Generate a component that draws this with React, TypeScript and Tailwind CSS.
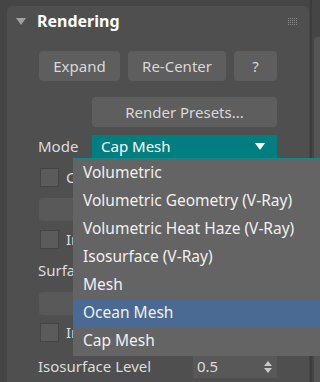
import React from 'react';

const font = { fontFamily: '"Noto Sans", "Open Sans", sans-serif' };

const modes = [
  'Volumetric',
  'Volumetric Geometry (V-Ray)',
  'Volumetric Heat Haze (V-Ray)',
  'Isosurface (V-Ray)',
  'Mesh',
  'Ocean Mesh',
  'Cap Mesh',
];

const Checkbox: React.FC<{ label: string }> = ({ label }) => (
  <div className="flex items-center h-[19px] ml-[33px] gap-[7px]">
    <div className="w-[19px] h-[19px] bg-[#5b5b5b] border border-[#444]" />
    <span className="text-[15px] text-[#dcdcdc] leading-none">{label}</span>
  </div>
);

const GripDots: React.FC = () => (
  <div className="grid grid-cols-5 gap-[1px]">
    {Array.from({ length: 20 }).map((_, i) => (
      <div key={i} className="w-[1px] h-[1px] bg-[#8a8a8a]" />
    ))}
  </div>
);

export default function App() {
  return (
    <div className="relative w-[320px] h-[382px] overflow-hidden bg-[#454545] flex" style={font}>
      {/* rollout panel */}
      <div className="ml-[7px] mt-[6px] w-[302px] h-[400px] rounded-t-[5px] bg-[#4f4f4f] flex flex-col">
        {/* header */}
        <div className="h-[30px] flex items-center pl-[9px] pr-[12px]">
          <div className="w-0 h-0 border-l-[5px] border-r-[5px] border-t-[7px] border-l-transparent border-r-transparent border-t-[#a0a0a0]" />
          <span className="ml-[11px] text-[16px] font-bold text-white">Rendering</span>
          <div className="ml-auto">
            <GripDots />
          </div>
        </div>

        {/* buttons */}
        <div className="mt-[15px] ml-[32px] flex gap-[8px] text-[15px] text-[#d8d8d8]">
          <div className="w-[81px] h-[30px] rounded-[4px] bg-[#5e5e5e] flex items-center justify-center">Expand</div>
          <div className="w-[98px] h-[30px] rounded-[4px] bg-[#5e5e5e] flex items-center justify-center">Re-Center</div>
          <div className="w-[43px] h-[30px] rounded-[4px] bg-[#5e5e5e] flex items-center justify-center">?</div>
        </div>

        <div className="mt-[16px] ml-[85px] w-[185px] h-[30px] rounded-[4px] bg-[#5e5e5e] flex items-center justify-center text-[15px] text-[#d8d8d8]">
          Render Presets...
        </div>

        {/* mode */}
        <div className="mt-[8px] h-[23px] flex items-center">
          <span className="ml-[31px] w-[54px] text-[15px] text-[#dcdcdc]">Mode</span>
          <div className="w-[185px] h-[23px] bg-[#017f80] flex items-center pl-[9px] pr-[12px] text-[15px] text-white">
            <span>Cap Mesh</span>
            <div className="ml-auto w-0 h-0 border-l-[5px] border-r-[5px] border-t-[7px] border-l-transparent border-r-transparent border-t-white" />
          </div>
        </div>

        <div className="mt-[10px]">
          <Checkbox label="Clip Mesh" />
        </div>
        <div className="mt-[11px] ml-[32px] w-[238px] h-[23px] rounded-[4px] bg-[#595959]" />
        <div className="mt-[9px]">
          <Checkbox label="Invert Volume" />
        </div>
        <div className="mt-[10px] h-[23px] flex items-center ml-[31px] text-[15px] text-[#dcdcdc]">Surface Channel</div>
        <div className="mt-[10px] ml-[32px] w-[238px] h-[23px] rounded-[4px] bg-[#595959]" />
        <div className="mt-[8px]">
          <Checkbox label="Invert Surface" />
        </div>

        {/* isosurface level */}
        <div className="mt-[13px] h-[23px] flex items-center">
          <span className="ml-[31px] w-[155px] text-[15px] text-[#dcdcdc]">Isosurface Level</span>
          <div className="w-[84px] h-[23px] bg-[#585858] flex items-center pl-[4px] pr-[5px] text-[15px] text-[#dcdcdc]">
            <span>0.5</span>
            <div className="ml-auto flex flex-col gap-[2px]">
              <div className="w-0 h-0 border-l-[4px] border-r-[4px] border-b-[5px] border-l-transparent border-r-transparent border-b-[#c8c8c8]" />
              <div className="w-0 h-0 border-l-[4px] border-r-[4px] border-t-[5px] border-l-transparent border-r-transparent border-t-[#c8c8c8]" />
            </div>
          </div>
        </div>
      </div>

      {/* right gutter and next panel */}
      <div className="ml-[1px] w-[2px] bg-[#3c3c3c]" />
      <div className="ml-[2px] mt-[37px] flex-1 rounded-tl-[4px] bg-[#555]" />

      {/* open dropdown, covers the labels below Mode */}
      <div className="absolute left-[73px] top-[158px] w-[260px] border border-[#0a8c8c] bg-[#646464] text-[15.5px] text-[#f0f0f0]">
        {modes.map((m) => (
          <div
            key={m}
            className={`h-[28px] flex items-center pl-[9px] ${m === 'Ocean Mesh' ? 'bg-[#4a6a94]' : ''}`}
          >
            {m}
          </div>
        ))}
      </div>
    </div>
  );
}
